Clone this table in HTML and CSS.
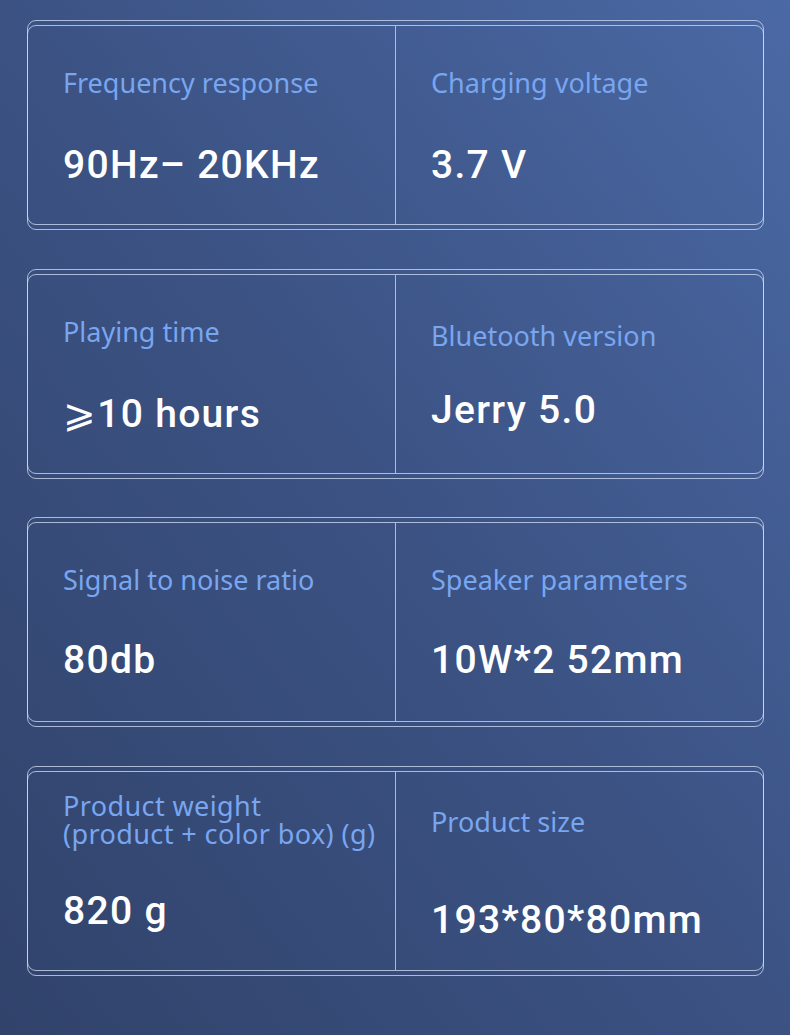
FILE: index.html
```html
<!DOCTYPE html>
<html lang="en">
<head>
<meta charset="utf-8">
<title>Specifications</title>
<link rel="stylesheet" href="styles.css">
</head>
<body>
<main class="specs">
  <section class="card">
    <div class="card-inner">
      <div class="cell">
        <div class="label">Frequency response</div>
        <div class="value">90Hz– 20KHz</div>
      </div>
      <div class="cell cell-right">
        <div class="label">Charging voltage</div>
        <div class="value">3.7 V</div>
      </div>
    </div>
  </section>
  <section class="card">
    <div class="card-inner">
      <div class="cell">
        <div class="label">Playing time</div>
        <div class="value">⩾10 hours</div>
      </div>
      <div class="cell cell-right cell-low">
        <div class="label">Bluetooth version</div>
        <div class="value">Jerry 5.0</div>
      </div>
    </div>
  </section>
  <section class="card">
    <div class="card-inner">
      <div class="cell cell-mid">
        <div class="label">Signal to noise ratio</div>
        <div class="value">80db</div>
      </div>
      <div class="cell cell-right cell-mid">
        <div class="label">Speaker parameters</div>
        <div class="value">10W*2 52mm</div>
      </div>
    </div>
  </section>
  <section class="card">
    <div class="card-inner">
      <div class="cell cell-two">
        <div class="label">Product weight<br>(product + color box) (g)</div>
        <div class="value">820 g</div>
      </div>
      <div class="cell cell-right cell-size">
        <div class="label">Product size</div>
        <div class="value">193*80*80mm</div>
      </div>
    </div>
  </section>
</main>
</body>
</html>
```
FILE: styles.css
```css
html, body {
  margin: 0;
  padding: 0;
}
body {
  width: 790px;
  height: 1035px;
  overflow: hidden;
  background: linear-gradient(to top right, #31436b 0%, #3b5283 50%, #4b69a5 100%);
}
.specs {
  display: flex;
  flex-direction: column;
  gap: 38.7px;
  padding: 20px 26px 0 27px;
}
.card {
  height: 210px;
  box-sizing: border-box;
  border: 1px solid rgba(205, 218, 242, 0.78);
  border-radius: 9px;
}
.card-inner {
  margin: 4px -1px;
  height: 200px;
  box-sizing: border-box;
  border: 1px solid rgba(205, 218, 242, 0.78);
  border-radius: 9px;
  display: grid;
  grid-template-columns: 367px 1fr;
}
.cell {
  display: flex;
  flex-direction: column;
  padding-left: 35px;
}
.cell-right {
  border-left: 1px solid rgba(205, 218, 242, 0.78);
}
.label {
  font-family: "Noto Sans", "Open Sans", sans-serif;
  font-size: 27px;
  line-height: 32px;
  color: #79a6f0;
  margin-top: 41px;
  white-space: nowrap;
}
.value {
  font-family: Roboto, "Liberation Sans", sans-serif;
  font-weight: 500;
  font-size: 39px;
  line-height: 46px;
  letter-spacing: 1.3px;
  color: #ffffff;
  margin-top: 43px;
  white-space: nowrap;
}
.cell-low .label { margin-top: 45px; }
.cell-low .value { margin-top: 35px; }
.cell-mid .value { margin-top: 41px; }
.cell-two .label {
  margin-top: 20px;
  line-height: 28px;
  letter-spacing: 0.4px;
}
.cell-two .value { margin-top: 40px; }
.cell-size .label { margin-top: 34px; }
.cell-size .value { margin-top: 59px; }
```
